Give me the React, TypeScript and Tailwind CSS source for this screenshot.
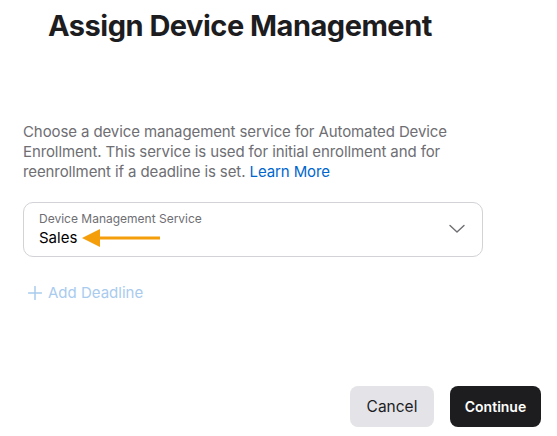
export default function App() {
  return (
    <div className="h-[436px] w-[557px] bg-white font-['Inter',sans-serif] text-[#1d1d1f] flex flex-col">
      <h1 className="pl-[48px] pt-[8px] text-[29px] font-bold leading-[36px] tracking-[-0.5px]">
        Assign Device Management
      </h1>

      <p className="mt-[78px] ml-[23px] w-[432px] text-[15px] leading-[20px] tracking-[-0.1px] text-[#6e6e73]">
        Choose a device management service for Automated Device Enrollment. This service is used for initial
        enrollment and for reenrollment if a deadline is set.{" "}
        <a className="text-[#0066cc]">Learn More</a>
      </p>

      <div className="mx-[23px] mt-[20px] w-[460px] h-[55px] rounded-[10px] border border-[#d2d2d7] flex items-center pl-[15px] pr-[17px]">
        <div className="flex-1 flex flex-col">
          <span className="text-[12px] leading-[16px] text-[#6e6e73]">Device Management Service</span>
          <div className="flex items-center">
            <span className="text-[15px] leading-[20px] text-black">Sales</span>
            <svg width="80" height="22" viewBox="0 0 80 22" className="ml-[5px]">
              <polygon points="0,11 18,2 18,20" fill="#f59e0b" />
              <rect x="16" y="9.5" width="62" height="3" fill="#f59e0b" />
            </svg>
          </div>
        </div>
        <svg width="16" height="10" viewBox="0 0 16 10" className="mt-[-2px]">
          <path d="M1 1.5 L8 8 L15 1.5" fill="none" stroke="#6e6e73" strokeWidth="1.4" strokeLinecap="round" strokeLinejoin="round" />
        </svg>
      </div>

      <div className="mt-[25px] ml-[28px] flex items-center gap-[6px] text-[15px] text-[#a9cbee]">
        <svg width="14" height="14" viewBox="0 0 14 14">
          <path d="M7 0.5 V13.5 M0.5 7 H13.5" stroke="#a9cbee" strokeWidth="1.5" strokeLinecap="round" />
        </svg>
        <span>Add Deadline</span>
      </div>

      <div className="mt-auto mb-[9px] flex justify-end gap-[16px] pr-[16px]">
        <button className="h-[41px] w-[84px] rounded-[8px] bg-[#e3e3e8] text-[15.5px] text-[#1d1d1f]">Cancel</button>
        <button className="h-[41px] w-[91px] rounded-[8px] bg-[#1d1d1f] text-[14px] font-semibold text-white">
          Continue
        </button>
      </div>
    </div>
  );
}
